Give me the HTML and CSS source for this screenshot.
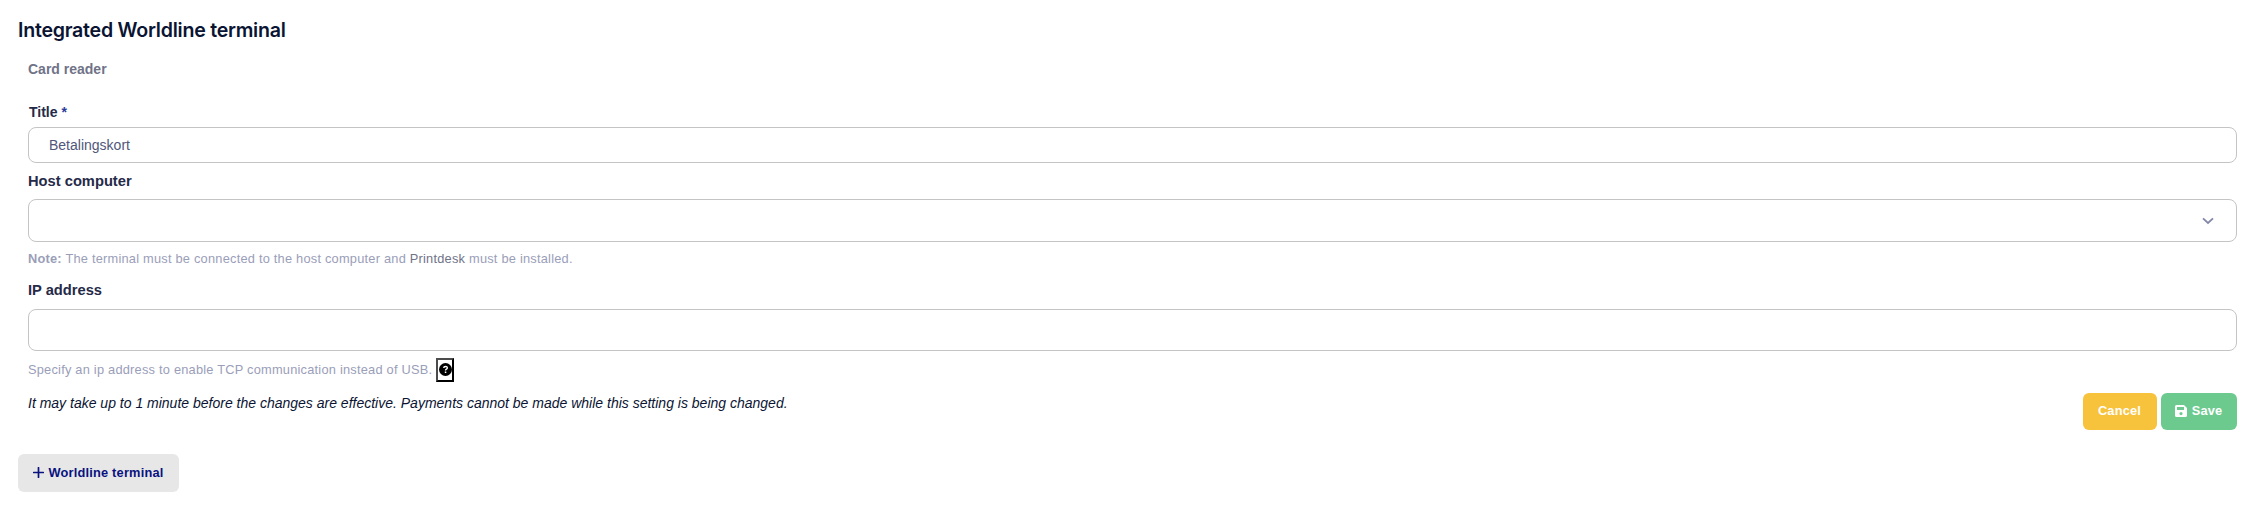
FILE: index.html
```html
<!DOCTYPE html>
<html lang="en">
<head>
    <meta charset="UTF-8">
    <meta name="viewport" content="width=device-width, initial-scale=1.0">
    <title>Integrated Worldline terminal</title>
    <link rel="stylesheet" href="styles.css">
</head>
<body>

<section class="container">
    <h2>Integrated Worldline terminal</h2>

    <form class="terminal-form">
        <p class="device-type">Card reader</p>

        <label class="title-label" for="title">Title <span class="required">*</span></label>
        <input class="title-input" type="text" id="title" name="title" value="Betalingskort">

        <label class="host-label" for="host">Host computer</label>
        <div class="select-box" id="host">
            <svg width="12" height="8" viewBox="0 0 12 8">
                <path d="M1 1.3 L6 6 L11 1.3" fill="none" stroke="#8488a8" stroke-width="1.8"/>
            </svg>
        </div>
        <p class="help-text host-help"><b>Note:</b> The terminal must be connected to the host computer and <span class="link">Printdesk</span> must be installed.</p>

        <label class="ip-label" for="ip">IP address</label>
        <input class="ip-input" type="text" id="ip" name="ip">
        <div class="help-text ip-help">
            <span>Specify an ip address to enable TCP communication instead of USB.</span>
            <button type="button" class="help-btn">
                <svg width="13" height="13" viewBox="0 0 13 13">
                    <circle cx="6.5" cy="6.5" r="6.5" fill="#000"/>
                    <path d="M4.7 5 C4.8 2.9 8.4 2.9 8.3 5 C8.2 6.3 6.5 6.1 6.5 7.5" fill="none" stroke="#fff" stroke-width="1.4"/>
                    <rect x="5.8" y="8.5" width="1.5" height="1.5" fill="#fff"/>
                </svg>
            </button>
        </div>

        <div class="form-footer">
            <p class="notice">It may take up to 1 minute before the changes are effective. Payments cannot be made while this setting is being changed.</p>
            <div class="actions">
                <button type="button" class="btn cancel-btn">Cancel</button>
                <button type="submit" class="btn save-btn">
                    <svg width="12" height="12" viewBox="0 0 12 12">
                        <path fill="#fff" fill-rule="evenodd" d="M1.5 0 H9 L12 3 V10.5 Q12 12 10.5 12 H1.5 Q0 12 0 10.5 V1.5 Q0 0 1.5 0 Z M2 2 V5 H9 V2 Z M6 7 A1.6 1.6 0 1 0 6 10.2 A1.6 1.6 0 1 0 6 7 Z"/>
                    </svg>
                    Save
                </button>
            </div>
        </div>
    </form>

    <button type="button" class="btn add-btn">
        <svg width="11" height="11" viewBox="0 0 11 11">
            <path d="M5.5 0.7 V10.3 M0.7 5.5 H10.3" stroke="#0a1280" stroke-width="1.7" stroke-linecap="round"/>
        </svg>
        Worldline terminal
    </button>
</section>

</body>
</html>
```
FILE: styles.css
```css
* {
    box-sizing: border-box;
}

body {
    margin: 0;
    background-color: #fff;
    color: #0a1433;
    font-family: "Liberation Sans", Arial, sans-serif;
    font-size: 14px;
}

.container {
    padding: 18px 29px 0 18px;
}

h2 {
    margin: 0;
    height: 25px;
    line-height: 25px;
    font-family: Inter, sans-serif;
    font-size: 19.6px;
    font-weight: 600;
    letter-spacing: -0.25px;
}

p {
    margin: 0;
}

.terminal-form {
    display: flex;
    flex-direction: column;
    padding-left: 10px;
}

.device-type {
    margin-top: 16px;
    line-height: 20px;
    font-weight: bold;
    color: #6f7388;
}

label {
    line-height: 20px;
    font-size: 14.7px;
    font-weight: bold;
    color: #252a48;
}

.title-label {
    margin: 23px 0 5px 1px;
    font-size: 14px;
}

.required {
    color: #2a3a9a;
}

input,
.select-box {
    width: 100%;
    border: 1px solid #c4c4c4;
    border-radius: 8px;
    background-color: #fff;
    padding: 0 20px;
    font-family: inherit;
    font-size: 14px;
    color: #50577a;
}

.title-input {
    height: 36px;
}

.host-label {
    margin: 8px 0;
}

.select-box {
    display: flex;
    align-items: center;
    justify-content: flex-end;
    height: 43px;
    padding-right: 22px;
}

.help-text {
    font-size: 12.8px;
    letter-spacing: 0.23px;
    color: #9a9eb9;
}

.host-help {
    margin-top: 7px;
    line-height: 20px;
}

.link {
    color: #6f7388;
}

.ip-label {
    margin: 11px 0 9px;
}

.ip-input {
    height: 42px;
}

.ip-help {
    display: flex;
    align-items: center;
    gap: 4px;
    height: 24px;
    margin-top: 7px;
}

.ip-help span {
    padding-bottom: 2px;
}

.help-btn {
    display: flex;
    align-items: center;
    justify-content: center;
    width: 18px;
    height: 24px;
    padding: 0 0 2px;
    border: 2px solid #000;
    border-top-color: #4c4c4c;
    border-left-color: #4c4c4c;
    background-color: #fff;
}

/* Notice on the left, buttons on the right */
.form-footer {
    display: flex;
    justify-content: space-between;
    margin-top: 11px;
}

.notice {
    line-height: 20px;
    font-style: italic;
}

.actions {
    display: flex;
    gap: 4px;
}

.btn {
    display: flex;
    align-items: center;
    justify-content: center;
    gap: 5px;
    height: 37px;
    padding: 0 1px 2px 0;
    border: none;
    border-radius: 6px;
    font-family: inherit;
    font-size: 12.8px;
    font-weight: bold;
    letter-spacing: 0.2px;
    color: #fff;
    cursor: pointer;
}

.cancel-btn {
    width: 74px;
    background-color: #f8c33c;
}

.save-btn {
    width: 76px;
    background-color: #6dca8f;
}

.add-btn {
    width: 161px;
    height: 38px;
    margin-top: 24px;
    background-color: #e7e7e7;
    color: #0a1280;
}
```
